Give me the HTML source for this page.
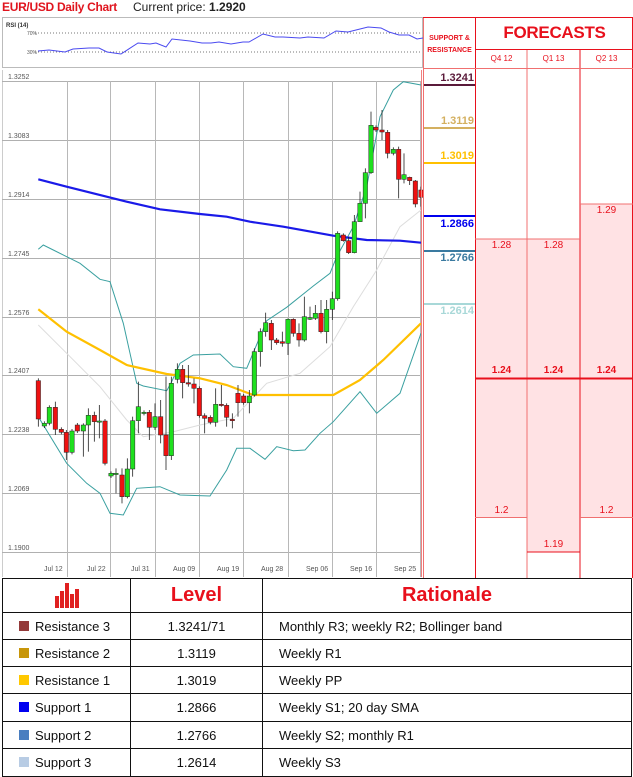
<!DOCTYPE html>
<html><head><meta charset="utf-8"><style>
*{margin:0;padding:0;box-sizing:border-box}
body{width:633px;height:777px;background:#fff;position:relative;overflow:hidden;font-family:"Liberation Sans",sans-serif}
.a{position:absolute}
</style></head><body>
<div class="a" style="left:2px;top:0;font-size:12px;font-weight:bold;color:#e0141e;letter-spacing:-0.3px">EUR/USD Daily Chart</div>
<div class="a" style="left:133px;top:0;font-size:12px;color:#222">Current price: <b>1.2920</b></div>

<svg class="a" style="left:0;top:0" width="633" height="777" id="s">
<rect x="2.5" y="17.5" width="420" height="50" fill="#fff" stroke="#bbb"/>
<line x1="35" y1="33" x2="420" y2="33" stroke="#777" stroke-dasharray="1,2"/>
<line x1="35" y1="52" x2="420" y2="52" stroke="#777" stroke-dasharray="1,2"/>
<text x="6" y="27" font-size="6" font-family="Liberation Sans" font-weight="bold" fill="#333">RSI (14)</text>
<text x="27" y="35" font-size="5" font-family="Liberation Sans" fill="#555">70%</text>
<text x="27" y="54" font-size="5" font-family="Liberation Sans" fill="#555">30%</text>
<polyline fill="none" stroke="#4a4af0" stroke-width="1" points="38,51 49,50 65,52 73,49 89,48 99,48 107,52 121,54 138,43 150,44 156,43 166,47 172,39 190,41 202,43 211,43 219,42 231,44 243,42 249,42 263,34 275,37 283,37 300,38 308,37 324,38 336,31 348,32 352,31 368,27 381,28 389,32 399,35 409,35 417,39 423,38"/>
<line x1="2.5" y1="70" x2="2.5" y2="577" stroke="#ccc"/>
<g id="grid" stroke="#aaa" stroke-width="1"></g>
<g id="lines"></g>
<g id="candles"></g>
<line x1="421.5" y1="70" x2="421.5" y2="577" stroke="#f08080"/>
</svg>

<svg class="a" style="left:0;top:0" width="633" height="777" id="r">
<rect x="475" y="239" width="52" height="279" fill="#ffe2e4"/>
<rect x="527" y="239" width="53" height="313" fill="#ffe2e4"/>
<rect x="580" y="204" width="53" height="314" fill="#ffe2e4"/>
<line x1="423.5" y1="17" x2="423.5" y2="578" stroke="#f07070"/>
<line x1="475.5" y1="17" x2="475.5" y2="578" stroke="#e8101c"/>
<line x1="527" y1="50" x2="527" y2="578" stroke="#f07070"/>
<line x1="580" y1="50" x2="580" y2="578" stroke="#e8101c"/>
<line x1="632.5" y1="17" x2="632.5" y2="578" stroke="#e8101c"/>
<line x1="423" y1="17.5" x2="633" y2="17.5" stroke="#e8101c"/>
<line x1="475" y1="49.5" x2="633" y2="49.5" stroke="#e8101c"/>
<line x1="423" y1="68.5" x2="633" y2="68.5" stroke="#f07070"/>
<line x1="475" y1="239" x2="580" y2="239" stroke="#f07070"/>
<line x1="580" y1="204" x2="633" y2="204" stroke="#f07070"/>
<line x1="475" y1="378.5" x2="633" y2="378.5" stroke="#e8101c" stroke-width="2"/>
<line x1="475" y1="517.5" x2="527" y2="517.5" stroke="#f07070"/>
<line x1="580" y1="517.5" x2="633" y2="517.5" stroke="#f07070"/>
<line x1="527" y1="552" x2="580" y2="552" stroke="#e8101c"/>
<line x1="424" y1="85" x2="475" y2="85" stroke="#5a1a3a" stroke-width="2"/>
<line x1="424" y1="128" x2="475" y2="128" stroke="#d4b060" stroke-width="2"/>
<line x1="424" y1="163" x2="475" y2="163" stroke="#ffc000" stroke-width="2"/>
<line x1="424" y1="216" x2="475" y2="216" stroke="#0000ee" stroke-width="2"/>
<line x1="424" y1="251" x2="475" y2="251" stroke="#3a7aa0" stroke-width="2"/>
<line x1="424" y1="304" x2="475" y2="304" stroke="#a8d8d8" stroke-width="2"/>
</svg>
<div class="a" style="left:424px;top:33px;width:51px;text-align:center;font-size:7px;font-weight:bold;color:#e8101c;line-height:12px">SUPPORT &amp;<br>RESISTANCE</div>
<div class="a" style="left:476px;top:23px;width:157px;text-align:center;font-size:17px;font-weight:bold;color:#e8101c;letter-spacing:-0.3px">FORECASTS</div>
<div class="a" style="left:476px;top:54px;width:51px;text-align:center;font-size:8px;color:#e8101c">Q4 12</div>
<div class="a" style="left:527px;top:54px;width:53px;text-align:center;font-size:8px;color:#e8101c">Q1 13</div>
<div class="a" style="left:580px;top:54px;width:53px;text-align:center;font-size:8px;color:#e8101c">Q2 13</div>
<div class="a" style="left:424px;top:72px;width:50px;text-align:right;font-size:11px;font-weight:bold;color:#5a1a3a">1.3241</div>
<div class="a" style="left:424px;top:115px;width:50px;text-align:right;font-size:11px;font-weight:bold;color:#d4b060">1.3119</div>
<div class="a" style="left:424px;top:150px;width:50px;text-align:right;font-size:11px;font-weight:bold;color:#ffc000">1.3019</div>
<div class="a" style="left:424px;top:218px;width:50px;text-align:right;font-size:11px;font-weight:bold;color:#0000ee">1.2866</div>
<div class="a" style="left:424px;top:252px;width:50px;text-align:right;font-size:11px;font-weight:bold;color:#3a7aa0">1.2766</div>
<div class="a" style="left:424px;top:305px;width:50px;text-align:right;font-size:11px;font-weight:bold;color:#a8d8d8">1.2614</div>
<div class="a" style="left:476px;top:240px;width:51px;text-align:center;font-size:10px;color:#e8101c">1.28</div>
<div class="a" style="left:527px;top:240px;width:53px;text-align:center;font-size:10px;color:#e8101c">1.28</div>
<div class="a" style="left:580px;top:205px;width:53px;text-align:center;font-size:10px;color:#e8101c">1.29</div>
<div class="a" style="left:476px;top:365px;width:51px;text-align:center;font-size:10px;font-weight:bold;color:#e8101c">1.24</div>
<div class="a" style="left:527px;top:365px;width:53px;text-align:center;font-size:10px;font-weight:bold;color:#e8101c">1.24</div>
<div class="a" style="left:580px;top:365px;width:53px;text-align:center;font-size:10px;font-weight:bold;color:#e8101c">1.24</div>
<div class="a" style="left:476px;top:505px;width:51px;text-align:center;font-size:10px;color:#e8101c">1.2</div>
<div class="a" style="left:580px;top:505px;width:53px;text-align:center;font-size:10px;color:#e8101c">1.2</div>
<div class="a" style="left:527px;top:539px;width:53px;text-align:center;font-size:10px;color:#e8101c">1.19</div>

<table class="a" style="left:2px;top:578px;width:630px;border-collapse:collapse;font-size:13px;color:#111">
<colgroup><col style="width:128px"><col style="width:132px"><col></colgroup>
<tr style="height:34px"><td style="border:1px solid #111;text-align:center">
<svg width="26" height="25" style="vertical-align:middle"><g fill="#e02020"><rect x="1" y="13" width="4" height="12"/><rect x="6" y="8" width="4" height="17"/><rect x="11" y="0" width="4" height="25"/><rect x="16" y="11" width="4" height="14"/><rect x="21" y="6" width="4" height="19"/></g></svg></td>
<td style="border:1px solid #111;text-align:center;font-size:20px;font-weight:bold;color:#e8101c">Level</td>
<td style="border:1px solid #111;text-align:center;font-size:20px;font-weight:bold;color:#e8101c">Rationale</td></tr>
<tr style="height:27px"><td style="border:1px solid #111;padding-left:16px"><span style="display:inline-block;width:10px;height:10px;background:#943a3a;margin-right:6px"></span>Resistance 3</td><td style="border:1px solid #111;text-align:center">1.3241/71</td><td style="border:1px solid #111;padding-left:16px">Monthly R3; weekly R2; Bollinger band</td></tr>
<tr style="height:27px"><td style="border:1px solid #111;padding-left:16px"><span style="display:inline-block;width:10px;height:10px;background:#c8960a;margin-right:6px"></span>Resistance 2</td><td style="border:1px solid #111;text-align:center">1.3119</td><td style="border:1px solid #111;padding-left:16px">Weekly R1</td></tr>
<tr style="height:27px"><td style="border:1px solid #111;padding-left:16px"><span style="display:inline-block;width:10px;height:10px;background:#ffc800;margin-right:6px"></span>Resistance 1</td><td style="border:1px solid #111;text-align:center">1.3019</td><td style="border:1px solid #111;padding-left:16px">Weekly PP</td></tr>
<tr style="height:28px"><td style="border:1px solid #111;padding-left:16px"><span style="display:inline-block;width:10px;height:10px;background:#0000f0;margin-right:6px"></span>Support 1</td><td style="border:1px solid #111;text-align:center">1.2866</td><td style="border:1px solid #111;padding-left:16px">Weekly S1; 20 day SMA</td></tr>
<tr style="height:27px"><td style="border:1px solid #111;padding-left:16px"><span style="display:inline-block;width:10px;height:10px;background:#4a7ec0;margin-right:6px"></span>Support 2</td><td style="border:1px solid #111;text-align:center">1.2766</td><td style="border:1px solid #111;padding-left:16px">Weekly S2; monthly R1</td></tr>
<tr style="height:28px"><td style="border:1px solid #111;padding-left:16px"><span style="display:inline-block;width:10px;height:10px;background:#b8cce4;margin-right:6px"></span>Support 3</td><td style="border:1px solid #111;text-align:center">1.2614</td><td style="border:1px solid #111;padding-left:16px">Weekly S3</td></tr>
</table>

<div class="a" style="left:8px;top:74px;font-size:7px;color:#555">1.3252</div>
<div class="a" style="left:8px;top:133px;font-size:7px;color:#555">1.3083</div>
<div class="a" style="left:8px;top:192px;font-size:7px;color:#555">1.2914</div>
<div class="a" style="left:8px;top:251px;font-size:7px;color:#555">1.2745</div>
<div class="a" style="left:8px;top:310px;font-size:7px;color:#555">1.2576</div>
<div class="a" style="left:8px;top:368px;font-size:7px;color:#555">1.2407</div>
<div class="a" style="left:8px;top:427px;font-size:7px;color:#555">1.2238</div>
<div class="a" style="left:8px;top:486px;font-size:7px;color:#555">1.2069</div>
<div class="a" style="left:8px;top:545px;font-size:7px;color:#555">1.1900</div>
<div class="a" style="top:566px;left:44px;font-size:7px;color:#555">Jul 12</div>
<div class="a" style="top:566px;left:87px;font-size:7px;color:#555">Jul 22</div>
<div class="a" style="top:566px;left:131px;font-size:7px;color:#555">Jul 31</div>
<div class="a" style="top:566px;left:173px;font-size:7px;color:#555">Aug 09</div>
<div class="a" style="top:566px;left:217px;font-size:7px;color:#555">Aug 19</div>
<div class="a" style="top:566px;left:261px;font-size:7px;color:#555">Aug 28</div>
<div class="a" style="top:566px;left:306px;font-size:7px;color:#555">Sep 06</div>
<div class="a" style="top:566px;left:350px;font-size:7px;color:#555">Sep 16</div>
<div class="a" style="top:566px;left:394px;font-size:7px;color:#555">Sep 25</div>

<script>
var NS="http://www.w3.org/2000/svg";
function el(p,n,a){var e=document.createElementNS(NS,n);for(var k in a)e.setAttribute(k,a[k]);p.appendChild(e);return e;}
var g=document.getElementById('grid');
[81,140,199,258,317,375,434,493,552].forEach(function(y){el(g,'line',{x1:2,x2:421,y1:y+.5,y2:y+.5,stroke:'#b0b0b0'});});
[67,110,155,199,243,288,332,376,420].forEach(function(x){el(g,'line',{x1:x+.5,x2:x+.5,y1:81,y2:577,stroke:'#b8b8b8'});});
function pts(a){return a.map(function(p){return (p[0]/3).toFixed(1)+','+(p[1]/3+70).toFixed(1)}).join(' ');}
var L=document.getElementById('lines');
el(L,'polyline',{fill:'none',stroke:'#ddd','stroke-width':1,points:pts([[115,765],[200,850],[300,950],[380,1050],[430,1100],[520,1085],[600,1065],[700,1045],[800,940],[900,910],[990,830],[1060,710],[1130,600],[1200,470],[1263,420]])});
el(L,'polyline',{fill:'none',stroke:'#3aa0a0','stroke-width':1,points:pts([[115,538],[130,525],[160,540],[200,560],[240,580],[300,628],[330,635],[370,760],[410,940],[430,948],[500,962],[515,935],[540,880],[580,855],[660,852],[700,890],[740,895],[800,752],[860,712],[940,648],[990,610],[1010,560],[1060,470],[1100,350],[1140,140],[1180,60],[1210,35],[1263,45]])});
el(L,'polyline',{fill:'none',stroke:'#3aa0a0','stroke-width':1,points:pts([[115,1040],[200,1180],[260,1240],[300,1270],[330,1330],[370,1335],[410,1255],[480,1250],[540,1275],[630,1278],[680,1200],[710,1135],[750,1135],[795,1168],[830,1130],[880,1142],[915,1140],[960,1090],[1000,1055],[1080,965],[1130,1030],[1200,970],[1263,790]])});
el(L,'polyline',{fill:'none',stroke:'#ffc000','stroke-width':2.2,points:pts([[115,718],[200,785],[300,840],[380,885],[500,912],[600,925],[680,945],[760,975],[900,975],[1000,975],[1080,930],[1150,870],[1263,760]])});
el(L,'polyline',{fill:'none',stroke:'#1a1ae8','stroke-width':2.2,points:pts([[115,328],[200,350],[380,395],[480,418],[600,432],[680,440],[750,455],[850,470],[1000,497],[1100,510],[1200,512],[1263,518]])});
var C=[[115,932,1047,'r',925,1070],[133,1060,1068,'g'],[148,1012,1060,'g'],[166,1012,1078,'r',995,1095],[184,1078,1087,'r'],[199,1087,1147,'r',1080,1170],[216,1083,1147,'g'],[232,1065,1083,'r'],[250,1065,1083,'g',1060,1160],[265,1036,1065,'g',1015,1145],[283,1036,1055,'r',1025,1115],[298,1053,1056,'g',1005,1105],[315,1053,1180,'r'],[333,1210,1218,'g'],[348,1210,1213,'g',1195,1270],[366,1215,1280,'r',1195,1300],[382,1197,1280,'g',1165,1285],[398,1052,1197,'g',1040,1220],[415,1010,1052,'g',935,1090],[432,1027,1030,'g'],[448,1027,1072,'r',1020,1110],[465,1040,1072,'g',1000,1080],[482,1040,1095,'r',990,1120],[498,1095,1157,'r',920,1200],[514,940,1157,'g',920,1170],[532,898,928,'g',880,940],[548,898,938,'r',885,985],[565,938,942,'r',885,950],[582,942,955,'r',925,1000],[598,955,1037,'r'],[614,1037,1045,'r',1030,1090],[631,1042,1057,'r'],[647,1003,1057,'g',955,1070],[664,1003,1006,'r',945,1010],[680,1006,1042,'r',1000,1070],[697,1048,1052,'r',1030,1075],[714,970,998,'r',945,1040],[731,978,998,'r'],[748,978,998,'g',960,1030],[763,845,975,'g',835,980],[781,785,845,'g',775,890],[797,758,785,'g',728,800],[814,760,810,'r',750,840],[830,810,818,'r'],[847,815,820,'r',785,830],[864,748,820,'g',745,855],[880,748,790,'r',745,800],[897,790,810,'r',760,830],[913,740,810,'g',680,815],[930,743,748,'g',710,750],[946,730,745,'g',705,750],[963,730,785,'r',690,790],[980,718,785,'g',690,820],[997,686,718,'g',665,750],[1013,490,686,'g'],[1030,495,512,'r',490,515],[1046,512,548,'r',500,552],[1063,455,548,'g',435,550],[1080,400,455,'g',365,455],[1096,308,400,'g',295,445],[1113,166,308,'g',125,312],[1128,172,180,'r'],[1146,180,186,'r',120,210],[1163,187,250,'r',180,265],[1180,238,250,'g'],[1196,238,328,'r',230,385],[1212,314,328,'g',250,340],[1229,322,332,'r',320,345],[1246,333,402,'r',330,412],[1263,360,382,'r',350,410]];
var K=document.getElementById('candles');
C.forEach(function(c){var x=c[0]/3,t=c[1]/3+70,b=c[2]/3+70;var hi=(c[4]||c[1]-6)/3+70,lo=(c[5]||c[2]+6)/3+70;
el(K,'line',{x1:x,x2:x,y1:hi,y2:lo,stroke:'#222','stroke-width':0.8});
el(K,'rect',{x:x-2.2,y:t,width:4.4,height:Math.max(b-t,1.2),fill:c[3]=='g'?'#1ee01e':'#ee1111',stroke:'#222','stroke-width':0.5});});
</script>
</body></html>
